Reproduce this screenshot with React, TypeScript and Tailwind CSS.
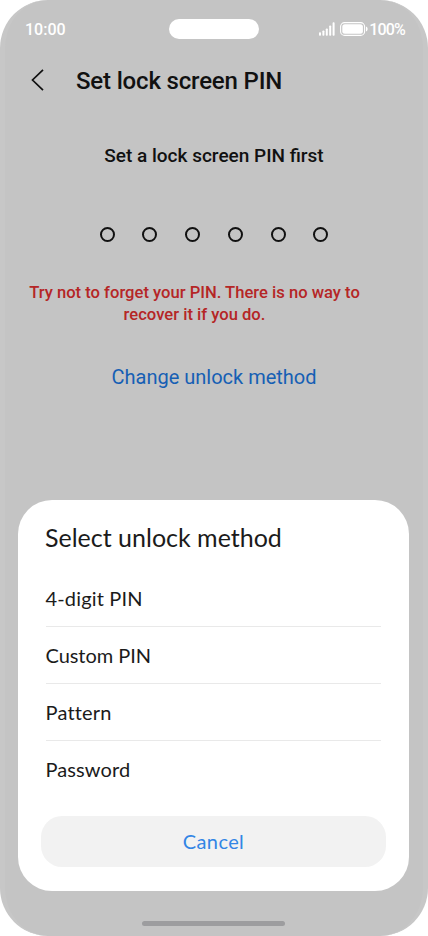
const dots = [0, 1, 2, 3, 4, 5];

const methods = [
  { label: "4-digit PIN", tracking: "tracking-[0.15px]" },
  { label: "Custom PIN", tracking: "tracking-[-0.05px]" },
  { label: "Pattern", tracking: "tracking-[0.2px]" },
  { label: "Password", tracking: "tracking-[0.1px]" },
];

function StatusBar() {
  return (
    <header className="grid h-[58px] shrink-0 grid-cols-[1fr_90px_1fr] items-center px-[18px] text-base font-medium text-white">
      <span className="pl-[2px] pt-px">10:00</span>
      <span className="h-[20px] rounded-full bg-white" />
      <div className="flex items-center justify-end">
        <svg width="16" height="14" viewBox="0 0 16 14" fill="currentColor">
          <rect x="0" y="10.2" width="2" height="3.5" rx="0.8" />
          <rect x="3.4" y="8.5" width="2" height="5.2" rx="0.8" />
          <rect x="6.8" y="6.5" width="2" height="7.2" rx="0.8" />
          <rect x="10.2" y="3.5" width="2" height="10.2" rx="0.8" />
          <rect x="13.6" y="0.3" width="2" height="13.4" rx="0.8" />
        </svg>
        <svg className="ml-[5px]" width="28" height="14" viewBox="0 0 28 14" fill="currentColor">
          <rect x="0.6" y="0.6" width="24" height="12.8" rx="4" fill="none" stroke="currentColor" strokeWidth="1.1" />
          <rect x="2.3" y="2.3" width="20.6" height="9.4" rx="2.5" />
          <path d="M26 4.5c2.2.7 2.2 4.3 0 5z" />
        </svg>
        <span className="ml-px pt-px tracking-[-0.8px]">100%</span>
      </div>
    </header>
  );
}

function UnlockSheet() {
  return (
    <section className="mt-[110px] mr-[14px] ml-[12.5px] flex h-[391px] shrink-0 flex-col rounded-[34px] bg-white pr-[23px] pl-[23.5px] font-['Lato',sans-serif] text-[#1b1b1b]">
      <h2 className="mt-[19px] pl-1 text-[25px] leading-[36px] whitespace-nowrap">Select unlock method</h2>
      <ul className="mt-[15px] pr-[5px] pl-[4.5px]">
        {methods.map((method) => (
          <li
            key={method.label}
            className={`flex h-[56.9px] items-center border-b border-[#e9e9e9] text-[20px] last:border-0 last:pb-px ${method.tracking}`}
          >
            {method.label}
          </li>
        ))}
      </ul>
      <button className="mt-[18px] h-[51px] rounded-[21px] bg-[#f2f2f2] pb-px text-[20px] tracking-[0.4px] text-[#3385e5]">
        Cancel
      </button>
    </section>
  );
}

export default function App() {
  return (
    <div className="h-[936px] w-[428px] bg-white">
      <main className="flex h-full flex-col overflow-hidden rounded-[48px] border-x-[5px] border-[#c7c7c7] bg-[#c4c4c4] font-['Roboto',sans-serif] text-[#111]">
        <StatusBar />
        <div className="flex h-[46px] shrink-0 items-center pl-[26px]">
          <svg className="mb-[2px]" width="13" height="22" viewBox="0 0 13 22" fill="none" stroke="currentColor" strokeWidth="1.7">
            <path d="M12 0.8 1.5 11 12 21.2" />
          </svg>
          <h1 className="ml-[32px] text-2xl font-medium tracking-[-0.17px] whitespace-nowrap">Set lock screen PIN</h1>
        </div>
        <p className="mt-[40px] text-center text-[19px] leading-6 font-medium">Set a lock screen PIN first</p>
        <div className="mt-[59px] flex justify-center gap-[27.8px]">
          {dots.map((dot) => (
            <span key={dot} className="size-[15px] rounded-full border-2 border-[#111]" />
          ))}
        </div>
        <p className="mt-[39.5px] -ml-[5px] w-[389px] text-center text-[16.6px] leading-[22px] font-medium text-[#b52626]">
          Try not to forget your PIN. There is no way to
          <br />
          recover it if you do.
        </p>
        <button className="mt-[36.5px] h-[28px] text-[20px] text-[#165fb4]">Change unlock method</button>
        <UnlockSheet />
        <div className="mx-auto mt-[30px] h-[4.5px] w-[143px] shrink-0 -translate-x-px rounded-full bg-[#9d9d9f]" />
      </main>
    </div>
  );
}
